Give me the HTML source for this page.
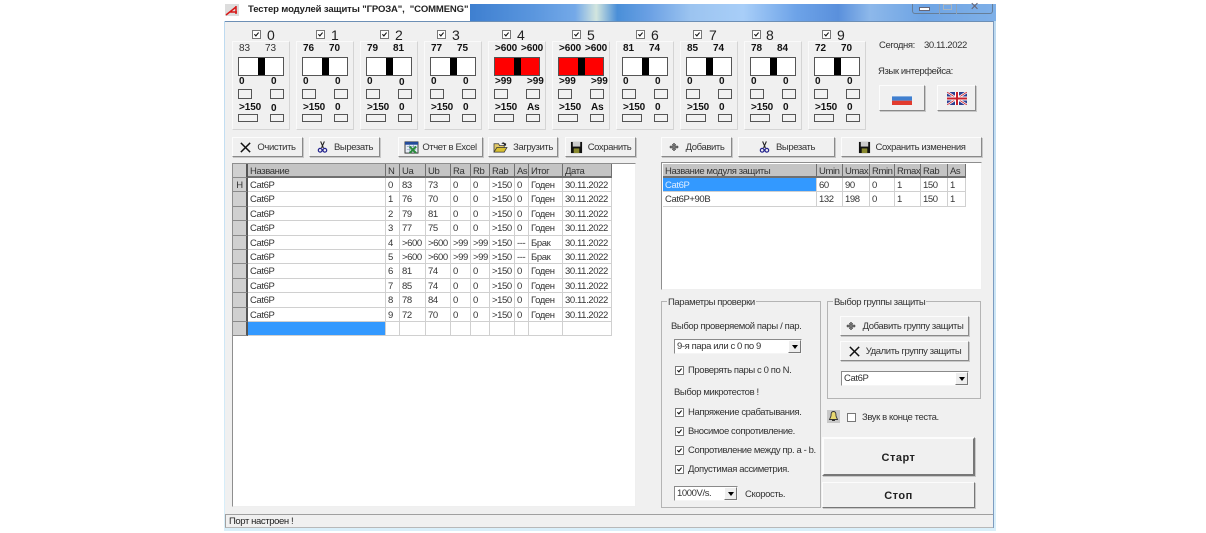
<!DOCTYPE html>
<html lang="ru"><head><meta charset="utf-8"><title>Тестер</title>
<style>
html,body{margin:0;padding:0;background:#fff}
body{width:1206px;height:533px;position:relative;overflow:hidden;font:9.5px "Liberation Sans",sans-serif;color:#222;letter-spacing:-.4px}
.a{filter:blur(.3px)}
.a,.a *{box-sizing:border-box}
.abs,.t,.p,.btn,.bx,.cb,.rb{position:absolute}
.t{white-space:nowrap;line-height:12px}
.p{width:58px;height:89px;top:41px;background:#f0f0f0;border:1px solid;border-color:#fafafa #d4d4d4 #d4d4d4 #fafafa}
.p .t{font-weight:bold;font-size:10px;color:#111;letter-spacing:-.1px}
.p .t.n{font-weight:normal;color:#333}
.big{position:absolute;left:5px;top:15px;width:46px;height:19px;background:#fff;border:1px solid #555}
.big i{position:absolute;left:19px;top:0;width:7px;height:17px;background:#000}
.red{background:#f00}
.bx{background:#f2f2f2;border:1px solid #555}
.s1{top:47px;width:14px;height:10px}
.s2{top:72px;height:8px}
.btn{background:#f0f0f0;border:1px solid;border-color:#fcfcfc #8a8a8a #8a8a8a #fcfcfc;box-shadow:1px 1px 0 #c8c8c8;display:flex;align-items:center;justify-content:center;gap:5px;white-space:nowrap;font-size:9.5px;color:#333}
.cb{width:9px;height:9px;background:#fff;border:1px solid #777}
.cb svg{position:absolute;left:0;top:0}
.grid{position:absolute;background:#fff;border:1px solid;border-color:#8e8e8e #efefef #efefef #8e8e8e}
.r{display:flex;height:14.4px;line-height:15px;font-size:9.5px;color:#333}
.r span{display:block;flex:none;border-right:1px solid #d0d0d0;border-bottom:1px solid #d0d0d0;padding-left:2px;overflow:hidden;white-space:nowrap}
.h{height:14px}
.h span{background:#c4c4c4;border-right:1px solid #6f6f6f;border-bottom:2px solid #6f6f6f;color:#333}
.r span:first-child.f{background:#d0d0d0;border-right:2px solid #555;border-bottom:1px solid #8a8a8a;text-align:center;padding:0}
.L span:nth-child(1){width:15px}.L span:nth-child(2){width:138px}.L span:nth-child(3){width:14px}.L span:nth-child(4){width:26px}.L span:nth-child(5){width:25px}.L span:nth-child(6){width:20px}.L span:nth-child(7){width:19px}.L span:nth-child(8){width:25px}.L span:nth-child(9){width:14px}.L span:nth-child(10){width:34px}.L span:nth-child(11){width:49px}
.R span:nth-child(1){width:154px}.R span:nth-child(2){width:26px}.R span:nth-child(3){width:27px}.R span:nth-child(4){width:25px}.R span:nth-child(5){width:26px}.R span:nth-child(6){width:27px}.R span:nth-child(7){width:18px}
.gb{position:absolute;border:1px solid #b4b4b4}
.lg{position:absolute;background:#f0f0f0;padding:0 1px;line-height:11px;white-space:nowrap;color:#333}
.combo{position:absolute;background:#fff;border:1px solid;border-color:#8a8a8a #f5f5f5 #f5f5f5 #8a8a8a;line-height:14px;padding-left:2px;color:#333;white-space:nowrap}
.combo b{position:absolute;right:0;top:0;width:13px;height:13px;background:#eee;border:1px solid;border-color:#fff #777 #777 #fff}
.combo b:after{content:"";position:absolute;left:3px;top:4px;border:3px solid transparent;border-top:4px solid #000;border-bottom:0}
.d{font-size:14px;letter-spacing:0;color:#222}
</style></head>
<body>
<svg width="0" height="0" style="position:absolute">
<symbol id="x" viewBox="0 0 14 14"><path d="M2 2L12 12M12 2L2 12" stroke="#111" stroke-width="1.6" fill="none"/></symbol>
<symbol id="sc" viewBox="0 0 14 14"><path d="M5 1L8 8M9 1L6 8" stroke="#222" stroke-width="1.2" fill="none"/><circle cx="4.5" cy="10.5" r="2" fill="none" stroke="#23238e" stroke-width="1.3"/><circle cx="9.5" cy="10.5" r="2" fill="none" stroke="#23238e" stroke-width="1.3"/></symbol>
<symbol id="fl" viewBox="0 0 14 14"><rect x="1" y="1" width="12" height="12" fill="#111"/><rect x="3" y="1" width="8" height="5" fill="#ccc"/><rect x="4" y="8" width="6" height="5" fill="#8a8a30"/></symbol>
<symbol id="xl" viewBox="0 0 16 14"><rect x="1" y="1" width="14" height="12" fill="#e6eef7" stroke="#333"/><rect x="1" y="1" width="14" height="3" fill="#224a9a"/><path d="M3 6h10M3 9h10M6 4v8M10 4v8" stroke="#7b8fb0" stroke-width=".6"/><path d="M6 6L13 13M13 6L6 13" stroke="#2a8a3a" stroke-width="2.2"/></symbol>
<symbol id="op" viewBox="0 0 16 14"><path d="M1 3h5l1 2h5v7H1z" fill="#e0c868" stroke="#333" stroke-width=".8"/><path d="M1 12l3-5h11l-3 5z" fill="#d8c030" stroke="#333" stroke-width=".8"/><path d="M9 3c1-2 3-2 4 0l1-1v3h-3l1-1c-.8-1-1.700-1-3-1z" fill="#222"/></symbol>
<symbol id="pl" viewBox="0 0 10 10"><path d="M5 1L7 3H6V4H9V6H6V7H7L5 9 3 7H4V6H1V4H4V3H3z" fill="#777" stroke="#222" stroke-width=".4"/></symbol>
<symbol id="ck" viewBox="0 0 9 9"><path d="M1.800 4.200L3.700 6.300 7.200 2" stroke="#111" stroke-width="1.400" fill="none"/></symbol>
</svg>
<div class="a">
<!-- window frame -->
<div class="abs" style="left:224px;top:4px;width:772px;height:527px;background:linear-gradient(180deg,#bcd9ef,#d9effa)"></div>
<div class="abs" style="left:470px;top:4px;width:526px;height:17px;background:linear-gradient(90deg,#3e7fd0 0,#5a96de 12%,#74a9e8 20%,#d2e5de 24%,#4a8fd8 28%,#6aa0e4 34%,#9cc4f0 42%,#a8cef8 52%,#6da3e8 62%,#5a90dc 70%,#8db8ea 76%,#6ea4e4 86%,#7fb0e8 100%)"></div>
<div class="abs" style="left:224px;top:4px;width:246px;height:17px;background:#fff"></div>
<svg class="abs" style="left:225px;top:4px" width="14" height="12" viewBox="0 0 14 12"><rect width="14" height="12" fill="#ddd"/><path d="M1 11L11 3M11 2V10M5 8h7" stroke="#d81818" stroke-width="1.500" fill="none"/></svg>
<div class="t" style="left:248px;top:4px;font-weight:bold;font-size:9.5px;letter-spacing:-.12px;color:#222;line-height:12px">Тестер модулей защиты "ГРОЗА",&nbsp; "COMMENG"</div>
<div class="abs" style="left:912px;top:4px;width:81px;height:10px;border:1px solid #667e98;border-top:0;border-radius:0 0 3px 3px"></div>
<div class="abs" style="left:939px;top:4px;width:1px;height:10px;background:#8fa3b8"></div>
<div class="abs" style="left:956px;top:4px;width:1px;height:10px;background:#8fa3b8"></div>
<div class="abs" style="left:920px;top:8px;width:9px;height:2px;background:#fff;box-shadow:0 0 0 1px #667"></div>
<div class="abs" style="left:943px;top:4px;width:9px;height:6px;border:1px solid #a8b4c0"></div>
<div class="t" style="left:970px;top:1px;color:#667;font-size:11px">✕</div>
<div class="abs" style="left:225px;top:21px;width:769px;height:507px;background:#f0f0f0;border-top:1px solid #6d8fb5;border-right:1px solid #7d9cc0"></div>

<!-- module panels -->
<div class="cb" style="left:252px;top:30px"><svg width="7" height="7" viewBox="0 0 9 9"><use href="#ck"/></svg></div><div class="t d" style="left:267px;top:29px">0</div>
<div class="cb" style="left:316px;top:30px"><svg width="7" height="7" viewBox="0 0 9 9"><use href="#ck"/></svg></div><div class="t d" style="left:331px;top:29px">1</div>
<div class="cb" style="left:380px;top:30px"><svg width="7" height="7" viewBox="0 0 9 9"><use href="#ck"/></svg></div><div class="t d" style="left:395px;top:29px">2</div>
<div class="cb" style="left:437px;top:30px"><svg width="7" height="7" viewBox="0 0 9 9"><use href="#ck"/></svg></div><div class="t d" style="left:452px;top:29px">3</div>
<div class="cb" style="left:502px;top:30px"><svg width="7" height="7" viewBox="0 0 9 9"><use href="#ck"/></svg></div><div class="t d" style="left:517px;top:29px">4</div>
<div class="cb" style="left:572px;top:30px"><svg width="7" height="7" viewBox="0 0 9 9"><use href="#ck"/></svg></div><div class="t d" style="left:587px;top:29px">5</div>
<div class="cb" style="left:636px;top:30px"><svg width="7" height="7" viewBox="0 0 9 9"><use href="#ck"/></svg></div><div class="t d" style="left:651px;top:29px">6</div>
<div class="cb" style="left:693px;top:30px"><svg width="7" height="7" viewBox="0 0 9 9"><use href="#ck"/></svg></div><div class="t d" style="left:709px;top:29px">7</div>
<div class="cb" style="left:752px;top:30px"><svg width="7" height="7" viewBox="0 0 9 9"><use href="#ck"/></svg></div><div class="t d" style="left:766px;top:29px">8</div>
<div class="cb" style="left:822px;top:30px"><svg width="7" height="7" viewBox="0 0 9 9"><use href="#ck"/></svg></div><div class="t d" style="left:837px;top:29px">9</div>

<div class="p" style="left:232px"><div class="t n" style="left:6px;top:1px">83</div><div class="t n" style="left:32px;top:1px">73</div><div class="big"><i></i></div><div class="t" style="left:6px;top:34px">0</div><div class="t" style="left:38px;top:34px">0</div><div class="bx s1" style="left:5px"></div><div class="bx s1" style="left:37px"></div><div class="t" style="left:6px;top:60px">&gt;150</div><div class="t" style="left:38px;top:61px">0</div><div class="bx s2" style="left:5px;width:20px"></div><div class="bx s2" style="left:37px;width:14px"></div></div>
<div class="p" style="left:296px"><div class="t" style="left:6px;top:1px">76</div><div class="t" style="left:32px;top:1px">70</div><div class="big"><i></i></div><div class="t" style="left:6px;top:34px">0</div><div class="t" style="left:38px;top:34px">0</div><div class="bx s1" style="left:5px"></div><div class="bx s1" style="left:37px"></div><div class="t" style="left:6px;top:60px">&gt;150</div><div class="t" style="left:38px;top:60px">0</div><div class="bx s2" style="left:5px;width:20px"></div><div class="bx s2" style="left:37px;width:14px"></div></div>
<div class="p" style="left:360px"><div class="t" style="left:6px;top:1px">79</div><div class="t" style="left:32px;top:1px">81</div><div class="big"><i></i></div><div class="t" style="left:6px;top:34px">0</div><div class="t" style="left:38px;top:35px">0</div><div class="bx s1" style="left:5px"></div><div class="bx s1" style="left:37px"></div><div class="t" style="left:6px;top:60px">&gt;150</div><div class="t" style="left:38px;top:60px">0</div><div class="bx s2" style="left:5px;width:20px"></div><div class="bx s2" style="left:37px;width:14px"></div></div>
<div class="p" style="left:424px"><div class="t" style="left:6px;top:1px">77</div><div class="t" style="left:32px;top:1px">75</div><div class="big"><i></i></div><div class="t" style="left:6px;top:34px">0</div><div class="t" style="left:38px;top:34px">0</div><div class="bx s1" style="left:5px"></div><div class="bx s1" style="left:37px"></div><div class="t" style="left:6px;top:60px">&gt;150</div><div class="t" style="left:38px;top:60px">0</div><div class="bx s2" style="left:5px;width:20px"></div><div class="bx s2" style="left:37px;width:14px"></div></div>
<div class="p" style="left:488px"><div class="t" style="left:6px;top:1px">&gt;600</div><div class="t" style="left:32px;top:1px">&gt;600</div><div class="big red"><i></i></div><div class="t" style="left:6px;top:34px">&gt;99</div><div class="t" style="left:38px;top:34px">&gt;99</div><div class="bx s1 red" style="left:5px"></div><div class="bx s1 red" style="left:37px"></div><div class="t" style="left:6px;top:60px">&gt;150</div><div class="t" style="left:38px;top:60px">As</div><div class="bx s2" style="left:5px;width:20px"></div><div class="bx s2" style="left:37px;width:14px"></div></div>
<div class="p" style="left:552px"><div class="t" style="left:6px;top:1px">&gt;600</div><div class="t" style="left:32px;top:1px">&gt;600</div><div class="big red"><i></i></div><div class="t" style="left:6px;top:34px">&gt;99</div><div class="t" style="left:38px;top:34px">&gt;99</div><div class="bx s1 red" style="left:5px"></div><div class="bx s1 red" style="left:37px"></div><div class="t" style="left:6px;top:60px">&gt;150</div><div class="t" style="left:38px;top:60px">As</div><div class="bx s2" style="left:5px;width:20px"></div><div class="bx s2" style="left:37px;width:14px"></div></div>
<div class="p" style="left:616px"><div class="t" style="left:6px;top:1px">81</div><div class="t" style="left:32px;top:1px">74</div><div class="big"><i></i></div><div class="t" style="left:6px;top:34px">0</div><div class="t" style="left:38px;top:34px">0</div><div class="bx s1" style="left:5px"></div><div class="bx s1" style="left:37px"></div><div class="t" style="left:6px;top:60px">&gt;150</div><div class="t" style="left:38px;top:60px">0</div><div class="bx s2" style="left:5px;width:20px"></div><div class="bx s2" style="left:37px;width:14px"></div></div>
<div class="p" style="left:680px"><div class="t" style="left:6px;top:1px">85</div><div class="t" style="left:32px;top:1px">74</div><div class="big"><i></i></div><div class="t" style="left:6px;top:34px">0</div><div class="t" style="left:38px;top:34px">0</div><div class="bx s1" style="left:5px"></div><div class="bx s1" style="left:37px"></div><div class="t" style="left:6px;top:60px">&gt;150</div><div class="t" style="left:38px;top:60px">0</div><div class="bx s2" style="left:5px;width:20px"></div><div class="bx s2" style="left:37px;width:14px"></div></div>
<div class="p" style="left:744px"><div class="t" style="left:6px;top:1px">78</div><div class="t" style="left:32px;top:1px">84</div><div class="big"><i></i></div><div class="t" style="left:6px;top:34px">0</div><div class="t" style="left:38px;top:34px">0</div><div class="bx s1" style="left:5px"></div><div class="bx s1" style="left:37px"></div><div class="t" style="left:6px;top:60px">&gt;150</div><div class="t" style="left:38px;top:60px">0</div><div class="bx s2" style="left:5px;width:20px"></div><div class="bx s2" style="left:37px;width:14px"></div></div>
<div class="p" style="left:808px"><div class="t" style="left:6px;top:1px">72</div><div class="t" style="left:32px;top:1px">70</div><div class="big"><i></i></div><div class="t" style="left:6px;top:34px">0</div><div class="t" style="left:38px;top:34px">0</div><div class="bx s1" style="left:5px"></div><div class="bx s1" style="left:37px"></div><div class="t" style="left:6px;top:60px">&gt;150</div><div class="t" style="left:38px;top:60px">0</div><div class="bx s2" style="left:5px;width:20px"></div><div class="bx s2" style="left:37px;width:14px"></div></div>

<!-- date & language -->
<div class="t" style="left:879px;top:40px;color:#333">Сегодня:</div>
<div class="t" style="left:924px;top:40px;color:#333">30.11.2022</div>
<div class="t" style="left:878px;top:66px;color:#333">Язык интерфейса:</div>
<div class="btn" style="left:879px;top:85px;width:46px;height:26px"><svg width="20" height="13" viewBox="0 0 20 13"><rect width="20" height="4.400" fill="#eef2f6"/><rect y="4.400" width="20" height="4.300" fill="#3f7fd0"/><rect y="8.700" width="20" height="4.300" fill="#e23b2e"/></svg></div>
<div class="btn" style="left:937px;top:85px;width:39px;height:26px"><svg width="20" height="13" viewBox="0 0 20 13"><rect width="20" height="13" fill="#2c3f92"/><path d="M0 0L20 13M20 0L0 13" stroke="#fff" stroke-width="2.400"/><path d="M0 0L20 13M20 0L0 13" stroke="#c8202c" stroke-width=".8"/><path d="M10 0V13M0 6.500H20" stroke="#fff" stroke-width="4"/><path d="M10 0V13M0 6.500H20" stroke="#c8202c" stroke-width="2"/></svg></div>

<!-- toolbar buttons -->
<div class="btn" style="left:232px;top:137px;width:71px;height:20px"><svg width="13" height="13"><use href="#x"/></svg>Очистить</div>
<div class="btn" style="left:309px;top:137px;width:71px;height:20px"><svg width="13" height="14"><use href="#sc"/></svg>Вырезать</div>
<div class="btn" style="left:398px;top:137px;width:85px;height:20px;gap:3px"><svg width="15" height="13"><use href="#xl"/></svg>Отчет в Excel</div>
<div class="btn" style="left:488px;top:137px;width:70px;height:20px"><svg width="15" height="13"><use href="#op"/></svg>Загрузить</div>
<div class="btn" style="left:565px;top:137px;width:71px;height:20px"><svg width="13" height="13"><use href="#fl"/></svg>Сохранить</div>
<div class="btn" style="left:661px;top:137px;width:71px;height:20px;gap:7px"><svg width="10" height="10"><use href="#pl"/></svg>Добавить</div>
<div class="btn" style="left:738px;top:137px;width:97px;height:20px"><svg width="13" height="14"><use href="#sc"/></svg>Вырезать</div>
<div class="btn" style="left:841px;top:137px;width:141px;height:20px"><svg width="13" height="13"><use href="#fl"/></svg>Сохранить изменения</div>

<!-- left grid -->
<div class="grid L" style="left:232px;top:163px;width:404px;height:344px">
<div class="r h"><span class="f"></span><span>Название</span><span>N</span><span>Ua</span><span>Ub</span><span>Ra</span><span>Rb</span><span>Rab</span><span>As</span><span>Итог</span><span>Дата</span></div>
<div class="r"><span class="f">H</span><span>Cat6P</span><span>0</span><span>83</span><span>73</span><span>0</span><span>0</span><span>&gt;150</span><span>0</span><span>Годен</span><span>30.11.2022</span></div>
<div class="r"><span class="f"></span><span>Cat6P</span><span>1</span><span>76</span><span>70</span><span>0</span><span>0</span><span>&gt;150</span><span>0</span><span>Годен</span><span>30.11.2022</span></div>
<div class="r"><span class="f"></span><span>Cat6P</span><span>2</span><span>79</span><span>81</span><span>0</span><span>0</span><span>&gt;150</span><span>0</span><span>Годен</span><span>30.11.2022</span></div>
<div class="r"><span class="f"></span><span>Cat6P</span><span>3</span><span>77</span><span>75</span><span>0</span><span>0</span><span>&gt;150</span><span>0</span><span>Годен</span><span>30.11.2022</span></div>
<div class="r"><span class="f"></span><span>Cat6P</span><span>4</span><span>&gt;600</span><span>&gt;600</span><span>&gt;99</span><span>&gt;99</span><span>&gt;150</span><span>---</span><span>Брак</span><span>30.11.2022</span></div>
<div class="r"><span class="f"></span><span>Cat6P</span><span>5</span><span>&gt;600</span><span>&gt;600</span><span>&gt;99</span><span>&gt;99</span><span>&gt;150</span><span>---</span><span>Брак</span><span>30.11.2022</span></div>
<div class="r"><span class="f"></span><span>Cat6P</span><span>6</span><span>81</span><span>74</span><span>0</span><span>0</span><span>&gt;150</span><span>0</span><span>Годен</span><span>30.11.2022</span></div>
<div class="r"><span class="f"></span><span>Cat6P</span><span>7</span><span>85</span><span>74</span><span>0</span><span>0</span><span>&gt;150</span><span>0</span><span>Годен</span><span>30.11.2022</span></div>
<div class="r"><span class="f"></span><span>Cat6P</span><span>8</span><span>78</span><span>84</span><span>0</span><span>0</span><span>&gt;150</span><span>0</span><span>Годен</span><span>30.11.2022</span></div>
<div class="r"><span class="f"></span><span>Cat6P</span><span>9</span><span>72</span><span>70</span><span>0</span><span>0</span><span>&gt;150</span><span>0</span><span>Годен</span><span>30.11.2022</span></div>
<div class="r"><span class="f"></span><span style="background:#3399ff">&nbsp;</span><span></span><span></span><span></span><span></span><span></span><span></span><span></span><span></span><span></span></div>
</div>

<!-- right grid -->
<div class="grid R" style="left:661px;top:162px;width:321px;height:128px;padding-left:1px">
<div class="r h" style="width:303px;margin-top:1px"><span>Название модуля защиты</span><span>Umin</span><span>Umax</span><span>Rmin</span><span>Rmax</span><span>Rab</span><span>As</span></div>
<div class="r"><span style="background:#3399ff;color:#dcecff">Cat6P</span><span>60</span><span>90</span><span>0</span><span>1</span><span>150</span><span>1</span></div>
<div class="r"><span>Cat6P+90В</span><span>132</span><span>198</span><span>0</span><span>1</span><span>150</span><span>1</span></div>
</div>

<!-- params group -->
<div class="gb" style="left:661px;top:301px;width:160px;height:207px"></div>
<div class="lg" style="left:667px;top:297px">Параметры проверки</div>
<div class="t" style="left:671px;top:321px;color:#333">Выбор проверяемой пары / пар.</div>
<div class="combo" style="left:674px;top:339px;width:128px;height:15px">9-я пара или с 0 по 9<b></b></div>
<div class="cb" style="left:675px;top:366px"><svg width="7" height="7" viewBox="0 0 9 9"><use href="#ck"/></svg></div>
<div class="t" style="left:688px;top:365px;color:#333">Проверять пары с 0 по N.</div>
<div class="t" style="left:674px;top:387px;color:#333">Выбор микротестов !</div>
<div class="cb" style="left:675px;top:408px"><svg width="7" height="7" viewBox="0 0 9 9"><use href="#ck"/></svg></div>
<div class="t" style="left:688px;top:407px;color:#333">Напряжение срабатывания.</div>
<div class="cb" style="left:675px;top:427px"><svg width="7" height="7" viewBox="0 0 9 9"><use href="#ck"/></svg></div>
<div class="t" style="left:688px;top:426px;color:#333">Вносимое сопротивление.</div>
<div class="cb" style="left:675px;top:446px"><svg width="7" height="7" viewBox="0 0 9 9"><use href="#ck"/></svg></div>
<div class="t" style="left:688px;top:445px;color:#333">Сопротивление между пр. a - b.</div>
<div class="cb" style="left:675px;top:465px"><svg width="7" height="7" viewBox="0 0 9 9"><use href="#ck"/></svg></div>
<div class="t" style="left:688px;top:464px;color:#333">Допустимая ассиметрия.</div>
<div class="combo" style="left:674px;top:486px;width:64px;height:15px">1000V/s.<b></b></div>
<div class="t" style="left:745px;top:489px;color:#333">Скорость.</div>

<!-- protection group -->
<div class="gb" style="left:827px;top:301px;width:154px;height:98px"></div>
<div class="lg" style="left:833px;top:297px">Выбор группы защиты</div>
<div class="btn" style="left:840px;top:316px;width:129px;height:20px;gap:7px"><svg width="10" height="10"><use href="#pl"/></svg>Добавить группу защиты</div>
<div class="btn" style="left:840px;top:341px;width:129px;height:20px"><svg width="13" height="13"><use href="#x"/></svg>Удалить группу защиты</div>
<div class="combo" style="left:841px;top:371px;width:128px;height:15px">Cat6P<b></b></div>

<svg class="abs" style="left:827px;top:410px" width="13" height="13" viewBox="0 0 13 13"><rect width="13" height="13" fill="#c8c8c8"/><path d="M6.500 1.500C4 1.500 4 4 4 6L2.500 9.500H10.500L9 6C9 4 9 1.500 6.500 1.500ZM5 10.500H8" fill="#e8d870" stroke="#333" stroke-width=".9"/></svg>
<div class="cb" style="left:847px;top:413px"></div>
<div class="t" style="left:862px;top:412px;color:#333">Звук в конце теста.</div>

<div class="btn" style="left:822px;top:437px;width:153px;height:39px;padding-top:2px;font-weight:bold;font-size:11px;letter-spacing:.5px;color:#222;border-width:2px;border-color:#fcfcfc #777 #777 #fcfcfc">Старт</div>
<div class="btn" style="left:822px;top:482px;width:153px;height:26px;padding-top:1px;font-weight:bold;font-size:11px;letter-spacing:.5px;color:#222;border-color:#fcfcfc #777 #777 #fcfcfc">Стоп</div>

<!-- status bar -->
<div class="abs" style="left:225px;top:514px;width:768px;height:14px;background:#f0f0f0;border-top:1px solid #a0a0a0;border-left:1px solid #a0a0a0;border-bottom:1px solid #b8b8b8"></div>
<div class="t" style="left:229px;top:516px;color:#222">Порт настроен !</div>
</div>
</body></html>
